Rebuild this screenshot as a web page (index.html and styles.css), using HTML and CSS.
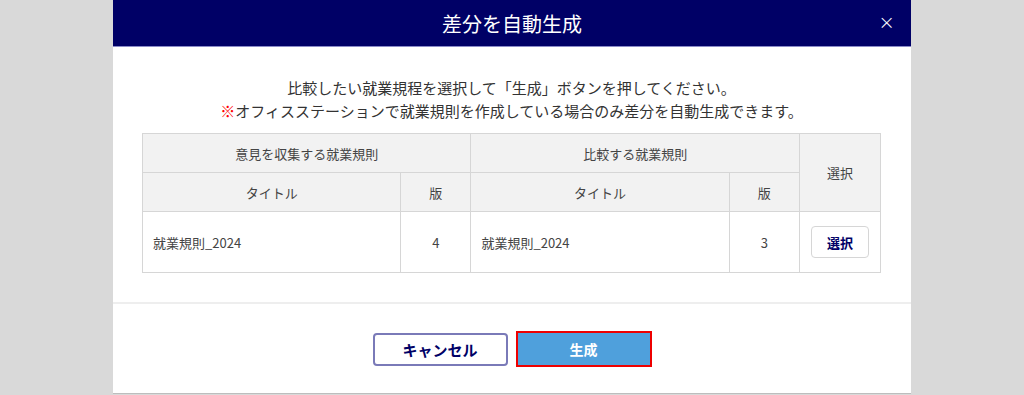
FILE: index.html
```html
<!DOCTYPE html>
<html lang="ja">
  <head>
    <meta charset="UTF-8" />
    <meta name="viewport" content="width=device-width, initial-scale=1.0" />
    <title>差分を自動生成</title>
    <link rel="stylesheet" href="styles.css">
  </head>
  <body>
    <div class="modal">
      <!-- header bar -->
      <div class="modal-header">
        <span class="modal-title">差分を自動生成</span>
        <span class="modal-close">×</span>
      </div>

      <div class="modal-body">
        <p class="lead">
          比較したい就業規程を選択して「生成」ボタンを押してください。<br />
          <span class="mark">※</span>オフィスステーションで就業規則を作成している場合のみ差分を自動生成できます。
        </p>

        <table class="rules">
          <colgroup>
            <col class="c-title" />
            <col class="c-ver" />
            <col class="c-title" />
            <col class="c-ver" />
            <col class="c-sel" />
          </colgroup>
          <tr>
            <th colspan="2">意見を収集する就業規則</th>
            <th colspan="2">比較する就業規則</th>
            <th rowspan="2">選択</th>
          </tr>
          <tr>
            <th>タイトル</th>
            <th>版</th>
            <th>タイトル</th>
            <th>版</th>
          </tr>
          <tr class="data">
            <td>就業規則_2024</td>
            <td class="num">4</td>
            <td>就業規則_2024</td>
            <td class="num">3</td>
            <td class="num"><button type="button" class="btn-select">選択</button></td>
          </tr>
        </table>
      </div>

      <!-- buttons -->
      <div class="modal-footer">
        <button type="button" class="btn btn-cancel">キャンセル</button>
        <button type="button" class="btn btn-create">生成</button>
      </div>
    </div>
  </body>
</html>
```

FILE: styles.css
```css
html,
body {
  margin: 0;
  padding: 0;
  background-color: #d9d9d9;
  font-family: "Noto Sans CJK JP", "Noto Sans", "Liberation Sans", sans-serif;
  color: #333333;
}

/* the dialog box */
.modal {
  width: 798px;
  height: 394px;
  margin-left: 113px;
  background-color: #ffffff;
  border-bottom: 1px solid #bdbdbd;
  box-sizing: border-box;
}

.modal-header {
  height: 47px;
  background-color: #000066;
  border-bottom: 1px solid #8b8bc8;
  box-sizing: border-box;
  display: flex;
  align-items: center;
  justify-content: center;
  position: relative;
  color: #ffffff;
}

.modal-title {
  font-size: 20px;
}

.modal-close {
  position: absolute;
  right: 16px;
  top: 10px;
  font-size: 20px;
  font-family: "DejaVu Sans", sans-serif;
  font-weight: 300;
}

.modal-body {
  padding: 29px 30px 29px 29px;
  border-bottom: 2px solid #eeeeee;
}

.lead {
  margin: 0 0 11px;
  text-align: center;
  font-size: 15px;
  line-height: 23px;
}

.mark {
  color: #ff0000;
}

/* table of rules */
.rules {
  width: 739px;
  border-collapse: collapse;
  table-layout: fixed;
  font-size: 13px;
}

.c-title {
  width: 258px;
}

.c-ver {
  width: 70px;
}

.c-sel {
  width: 81px;
}

.rules th,
.rules td {
  border: 1px solid #d6d6d6;
}

.rules th {
  height: 38px;
  padding: 0;
  background-color: #f2f2f2;
  font-weight: normal;
  color: #444444;
}

.rules td {
  height: 60px;
  padding: 0 10px;
  color: #444444;
}

.rules td.num {
  text-align: center;
}

.btn-select {
  width: 58px;
  height: 32px;
  background-color: #ffffff;
  border: 1px solid #d6d6d6;
  border-radius: 4px;
  font-family: inherit;
  font-size: 13px;
  font-weight: bold;
  color: #000066;
}

.modal-footer {
  display: flex;
  justify-content: center;
  align-items: center;
  gap: 8px;
  padding-top: 27px;
}

.btn {
  height: 33px;
  width: 135px;
  font-family: inherit;
  font-size: 15px;
  font-weight: bold;
  border-radius: 4px;
}

.btn-cancel {
  background-color: #ffffff;
  border: 2px solid #7a7ab8;
  color: #000066;
}

.btn-create {
  height: 36px;
  width: 136px;
  background-color: #4fa0dc;
  border: 2px solid #ee0000;
  border-radius: 0;
  color: #ffffff;
  font-size: 14px;
}
```
